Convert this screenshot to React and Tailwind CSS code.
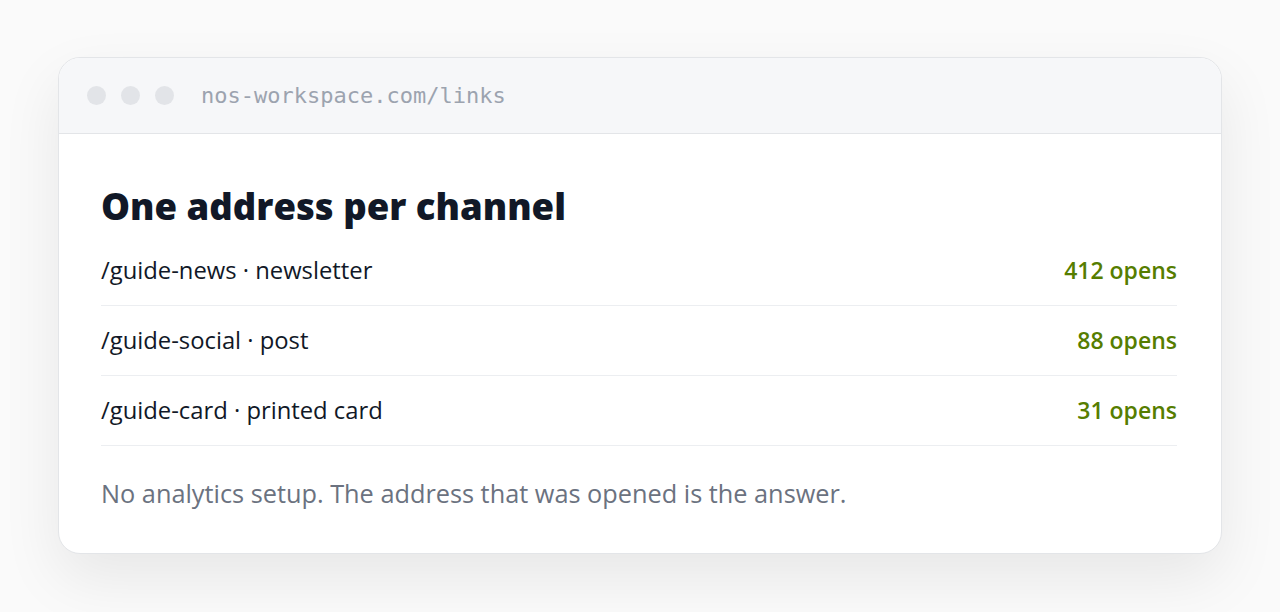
import React from 'react';

const rows = [
  { path: '/guide-news', channel: 'newsletter', opens: 412 },
  { path: '/guide-social', channel: 'post', opens: 88 },
  { path: '/guide-card', channel: 'printed card', opens: 31 },
];

export default function App() {
  return (
    <div className="min-h-screen bg-[#fafafa] px-[58px] pt-[57px] font-['Segoe_UI','Open_Sans',sans-serif] text-[#111827]">
      <div className="w-[1164px] rounded-[22px] border border-[#e3e5e8] bg-white shadow-[0_24px_60px_rgba(0,0,0,0.08)] overflow-hidden">
        {/* browser bar */}
        <div className="h-[76px] flex items-center gap-[15px] px-[28px] bg-[#f6f7f9] border-b border-[#e3e5e8]">
          <span className="w-[19px] h-[19px] rounded-full bg-[#e2e4e8]" />
          <span className="w-[19px] h-[19px] rounded-full bg-[#e2e4e8]" />
          <span className="w-[19px] h-[19px] rounded-full bg-[#e2e4e8]" />
          <span className="ml-[12px] font-['DejaVu_Sans_Mono',monospace] text-[22px] text-[#9ca3af]">nos-workspace.com/links</span>
        </div>

        <div className="pl-[42px] pr-[44px] pt-[50px] pb-[43px]">
          <h2 className="text-[36.5px] leading-[44px] font-black mb-[8px]">One address per channel</h2>
          <div>
            {rows.map((r) => (
              <div key={r.path} className="flex items-center justify-between h-[70px] border-b border-[#eceef1] leading-[33px]">
                <span className="text-[23.8px]">{r.path} · {r.channel}</span>
                <span className="text-[23px] text-[#567d00] font-semibold">{r.opens} opens</span>
              </div>
            ))}
          </div>
          <p className="mt-[31px] text-[25.3px] leading-[33px] text-[#6b7280]">No analytics setup. The address that was opened is the answer.</p>
        </div>
      </div>
    </div>
  );
}
